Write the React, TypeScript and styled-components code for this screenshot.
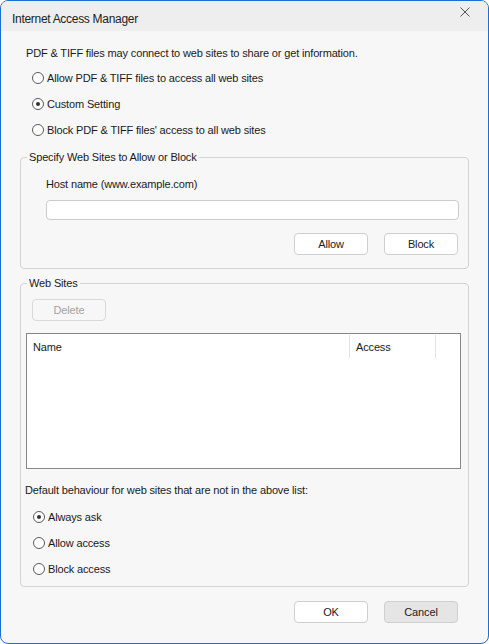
import React from "react"
import styled, { createGlobalStyle } from "styled-components"

const Global = createGlobalStyle`
  html, body { margin: 0; padding: 0; background: #ffffff; }
  * { box-sizing: border-box; }
`

const Window = styled.div`
  width: 489px;
  height: 644px;
  border: 1px solid #1c6fd1;
  border-radius: 8px;
  overflow: hidden;
  background: #f7f7f7;
  display: flex;
  flex-direction: column;
  font-family: "Liberation Sans", Arial, sans-serif;
  font-size: 11px;
  letter-spacing: -0.15px;
  color: #1a1a1a;
`

const TitleBar = styled.div`
  height: 30px;
  background: #eeeeee;
  display: flex;
  align-items: center;
  justify-content: space-between;
  padding: 0 8px 0 11px;
`

const Title = styled.span`
  font-size: 12px;
  letter-spacing: -0.3px;
  padding-top: 6px;
  color: #222;
`

const Close = styled.button`
  align-self: flex-start;
  width: 30px;
  height: 21px;
  border: none;
  background: transparent;
  display: flex;
  align-items: center;
  justify-content: center;
  padding: 0;
`

const Body = styled.div`
  flex: 1;
  display: flex;
  flex-direction: column;
  padding: 14px 19px 0 19px;
`

const Text = styled.div<{ $indent?: number; $top?: number }>`
  line-height: 16px;
  padding-left: ${(p) => p.$indent ?? 0}px;
  margin-top: ${(p) => p.$top ?? 0}px;
`

const Radios = styled.div<{ $top: number }>`
  display: flex;
  flex-direction: column;
  margin-top: ${(p) => p.$top}px;
  padding-left: 12px;
`

const RadioRow = styled.label`
  height: 26px;
  display: flex;
  align-items: center;
  gap: 3px;
`

const Dot = styled.span<{ $on?: boolean }>`
  width: 12px;
  height: 12px;
  border-radius: 50%;
  border: 1px solid #5c5c5c;
  background: #ffffff;
  display: flex;
  align-items: center;
  justify-content: center;
  &::after {
    content: "";
    width: 4px;
    height: 4px;
    border-radius: 50%;
    background: ${(p) => (p.$on ? "#333" : "transparent")};
  }
`

const Group = styled.fieldset<{ $top: number }>`
  margin: ${(p) => p.$top}px 0 0 0;
  padding: 0;
  border: 1px solid #d3d3d3;
  border-radius: 4px;
  display: flex;
  flex-direction: column;
  min-width: 0;
`

const Legend = styled.legend`
  margin-left: 6px;
  padding: 0 2px;
  line-height: 16px;
`

const Input = styled.input`
  margin: 8px 9px 0 25px;
  height: 20px;
  border: 1px solid #cccccc;
  border-radius: 4px;
  background: #ffffff;
  outline: none;
`

const ButtonRow = styled.div<{ $top: number; $right: number }>`
  display: flex;
  justify-content: flex-end;
  gap: 16px;
  margin-top: ${(p) => p.$top}px;
  padding-right: ${(p) => p.$right}px;
`

const Button = styled.button<{ $tone?: "plain" | "grey" | "off" }>`
  width: 74px;
  height: 22px;
  border-radius: 4px;
  font: inherit;
  letter-spacing: inherit;
  padding: 0;
  border: 1px solid ${(p) => (p.$tone === "off" ? "#dadada" : "#cfcfcf")};
  background: ${(p) =>
    p.$tone === "grey" ? "#e5e5e5" : p.$tone === "off" ? "#f7f7f7" : "#ffffff"};
  color: ${(p) => (p.$tone === "off" ? "#a3a3a3" : "#1a1a1a")};
`

const DeleteRow = styled.div`
  margin: 8px 0 0 11px;
`

const List = styled.div`
  margin: 12px 7px 0 5px;
  height: 136px;
  border: 1px solid #878787;
  background: #ffffff;
`

const Header = styled.div`
  display: grid;
  grid-template-columns: 323px 86px 1fr;
  height: 25px;
`

const Col = styled.div`
  display: flex;
  align-items: center;
  padding-left: 6px;
  margin-top: 1px;
  height: 23px;
  border-right: 1px solid #e3e3e3;
  &:last-child { border-right: none; }
`

const Spacer = styled.div<{ $h: number }>`
  height: ${(p) => p.$h}px;
`

const Footer = styled.div`
  display: flex;
  justify-content: flex-end;
  gap: 16px;
  margin-top: 14px;
  padding-right: 11px;
`

const CloseIcon = () => (
  <svg width="10" height="10" viewBox="0 0 10 10">
    <path d="M0.5 0.5 L9.5 9.5 M9.5 0.5 L0.5 9.5" stroke="#555" strokeWidth="1" />
  </svg>
)

const Radio = ({ label, on }: { label: string; on?: boolean }) => (
  <RadioRow>
    <Dot $on={on} />
    {label}
  </RadioRow>
)

export default function App() {
  return (
    <>
      <Global />
      <Window>
        <TitleBar>
          <Title>Internet Access Manager</Title>
          <Close>
            <CloseIcon />
          </Close>
        </TitleBar>
        <Body>
          <Text $indent={6}>PDF &amp; TIFF files may connect to web sites to share or get information.</Text>
          <Radios $top={4}>
            <Radio label="Allow PDF & TIFF files to access all web sites" />
            <Radio label="Custom Setting" on />
            <Radio label="Block PDF & TIFF files' access to all web sites" />
          </Radios>

          <Group $top={6}>
            <Legend>Specify Web Sites to Allow or Block</Legend>
            <Text $indent={25} $top={11}>Host name (www.example.com)</Text>
            <Input />
            <ButtonRow $top={13} $right={10}>
              <Button>Allow</Button>
              <Button>Block</Button>
            </ButtonRow>
            <Spacer $h={13} />
          </Group>

          <Group $top={6}>
            <Legend>Web Sites</Legend>
            <DeleteRow>
              <Button $tone="off">Delete</Button>
            </DeleteRow>
            <List>
              <Header>
                <Col>Name</Col>
                <Col>Access</Col>
                <Col />
              </Header>
            </List>
            <Text $indent={4} $top={13}>
              Default behaviour for web sites that are not in the above list:
            </Text>
            <Radios $top={6}>
              <Radio label="Always ask" on />
              <Radio label="Allow access" />
              <Radio label="Block access" />
            </Radios>
            <Spacer $h={4} />
          </Group>

          <Footer>
            <Button>OK</Button>
            <Button $tone="grey">Cancel</Button>
          </Footer>
        </Body>
      </Window>
    </>
  )
}
